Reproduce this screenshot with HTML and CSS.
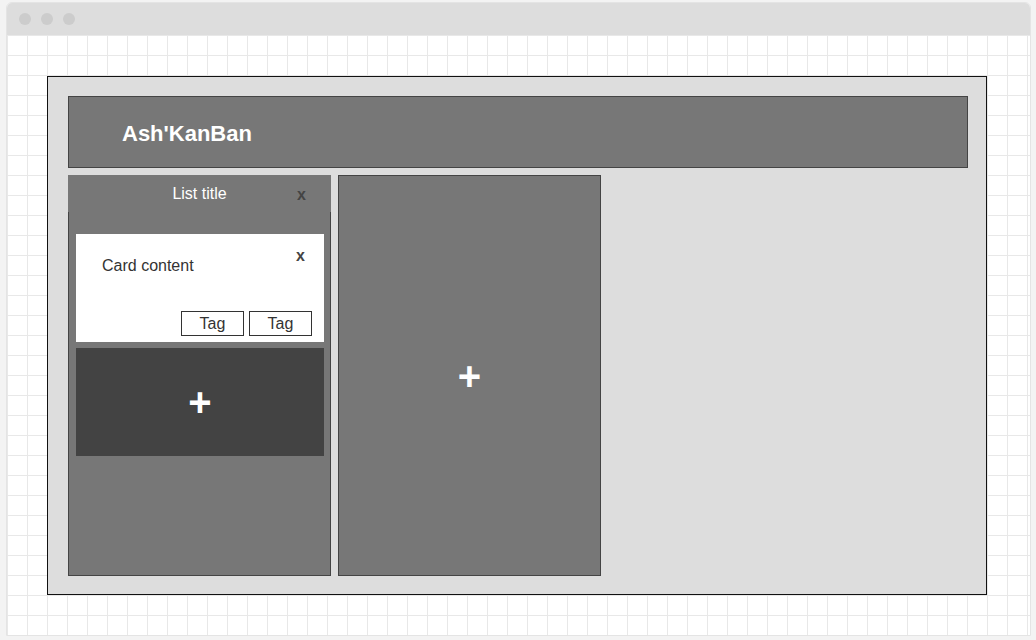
FILE: index.html
```html
<!DOCTYPE html>
<html>
<head>
<meta charset="utf-8">
<title>Ash'KanBan</title>
<link rel="stylesheet" href="styles.css">
</head>
<body>
<div class="window">
  <div class="titlebar">
    <span class="dot"></span><span class="dot"></span><span class="dot"></span>
  </div>
  <div class="viewport">
    <div class="board">
      <header class="board-header">
        <h1 class="board-title">Ash'KanBan</h1>
      </header>
      <div class="lists">
        <section class="list">
          <div class="list-head">
            <span class="list-title">List title</span>
            <span class="close close-list">x</span>
          </div>
          <div class="list-body">
            <div class="card">
              <div class="card-top">
                <span class="card-text">Card content</span>
                <span class="close close-card">x</span>
              </div>
              <div class="tags">
                <span class="tag">Tag</span>
                <span class="tag">Tag</span>
              </div>
            </div>
            <div class="add-card"><span class="plus">+</span></div>
          </div>
        </section>
        <section class="add-list"><span class="plus">+</span></section>
      </div>
    </div>
  </div>
</div>
</body>
</html>
```

FILE: styles.css
```css
* { box-sizing: border-box; }
html, body { margin: 0; padding: 0; }
body {
  background: #f3f3f3;
  font-family: "Liberation Sans", Arial, sans-serif;
  width: 1036px;
  height: 640px;
  overflow: hidden;
}
.window {
  margin: 2px 5px 0 6px;
  width: 1025px;
  height: 634px;
  border: 1px solid #e4e4e4;
  border-radius: 6px 6px 0 0;
  display: flex;
  flex-direction: column;
  background: #fff;
}
.titlebar {
  height: 32px;
  background: #dddddd;
  border-radius: 5px 5px 0 0;
  display: flex;
  align-items: center;
  gap: 10px;
  padding: 0 0 0 12px;
}
.dot {
  width: 12px;
  height: 12px;
  border-radius: 50%;
  background: #cccccc;
}
.viewport {
  flex: 1;
  background-color: #fff;
  background-image:
    linear-gradient(to right, #e8e8e8 1px, transparent 1px),
    linear-gradient(to bottom, #e8e8e8 1px, transparent 1px);
  background-size: 20px 20px;
  padding: 41px 0 0 40px;
}
.board {
  width: 940px;
  height: 519px;
  background: #dddddd;
  border: 1px solid #111;
  padding: 19px 18px 18px 20px;
  display: flex;
  flex-direction: column;
}
.board-header {
  height: 72px;
  background: #777777;
  border: 1px solid #444;
  display: flex;
  align-items: center;
  padding: 4px 0 0 53px;
}
.board-title {
  margin: 0;
  color: #fff;
  font-size: 22px;
  font-weight: bold;
}
.lists {
  margin-top: 7px;
  display: flex;
  gap: 7px;
  height: 401px;
}
.list {
  width: 263px;
  background: #777777;
  display: flex;
  flex-direction: column;
}
.list-head {
  height: 37px;
  display: grid;
  grid-template-columns: 1fr auto 1fr;
  align-items: start;
  padding-top: 10px;
  font-size: 16px;
}
.list-title {
  grid-column: 2;
  color: #fff;
}
.close {
  color: #444;
  font-weight: bold;
  font-size: 16px;
}
.close-list {
  grid-column: 3;
  justify-self: end;
  margin-right: 25px;
  margin-top: 1px;
}
.list-body {
  flex: 1;
  border: 1px solid #444;
  border-top: 0;
  padding: 22px 6px 0 7px;
}
.card {
  height: 108px;
  background: #fff;
  display: flex;
  flex-direction: column;
  padding: 13px 12px 6px 26px;
}
.card-top {
  display: flex;
  justify-content: space-between;
  align-items: flex-start;
}
.card-text {
  margin-top: 10px;
  color: #333;
  font-size: 16px;
}
.close-card {
  margin-right: 7px;
}
.tags {
  margin-top: auto;
  display: flex;
  justify-content: flex-end;
  gap: 5px;
}
.tag {
  width: 63px;
  height: 25px;
  border: 1px solid #333;
  display: flex;
  align-items: center;
  justify-content: center;
  color: #333;
  font-size: 16px;
}
.add-card {
  margin-top: 6px;
  height: 108px;
  background: #434343;
  display: flex;
  align-items: center;
  justify-content: center;
}
.add-list {
  width: 263px;
  background: #777777;
  border: 1px solid #444;
  display: flex;
  align-items: center;
  justify-content: center;
}
.plus {
  color: #fff;
  font-weight: bold;
  font-size: 40px;
  line-height: 1;
}
```
